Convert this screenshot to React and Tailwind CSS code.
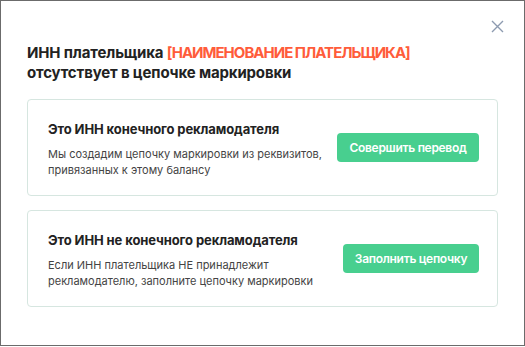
import React from 'react';

const options = [
  {
    title: 'Это ИНН конечного рекламодателя',
    lines: ['Мы создадим цепочку маркировки из реквизитов,', 'привязанных к этому балансу'],
    action: 'Совершить перевод',
    btn: 'w-[142px]',
  },
  {
    title: 'Это ИНН не конечного рекламодателя',
    lines: ['Если ИНН плательщика НЕ принадлежит', 'рекламодателю, заполните цепочку маркировки'],
    action: 'Заполнить цепочку',
    btn: 'w-[136px]',
  },
];

const App = () => {
  return (
    <div className="w-[525px] h-[347px] bg-white font-['Inter',sans-serif]">
      <div className="relative h-[346px] border border-[#6b6b6b] bg-white pl-[26px] pr-[26px] pt-[42px]">
        <button className="absolute right-[20px] top-[19px] text-[#8d9bb0]">
          <svg width="13" height="13" viewBox="0 0 13 13" fill="none">
            <path d="M1 1L12 12M12 1L1 12" stroke="currentColor" strokeWidth="1.4" />
          </svg>
        </button>

        <h2 className="text-[15px] leading-[20px] font-bold text-[#222] tracking-[-0.15px]">
          ИНН плательщика{' '}
          <span className="text-[#ff5c3a] tracking-[-1px]">[НАИМЕНОВАНИЕ ПЛАТЕЛЬЩИКА]</span>
          <br />
          отсутствует в цепочке маркировки
        </h2>

        <div className="mt-[16px] flex flex-col gap-[14px]">
          {options.map((o) => (
            <div
              key={o.title}
              className="flex h-[97px] items-center justify-between rounded-[4px] border border-[#d6e6e0] pl-[20px] pr-[18px]"
            >
              <div className="pt-[3px]">
                <div className="text-[13px] leading-[18px] font-bold text-[#222] tracking-[-0.1px]">{o.title}</div>
                <div className="mt-[8px] text-[11px] leading-[16px] text-[#444]">
                  {o.lines.map((l) => (
                    <div key={l}>{l}</div>
                  ))}
                </div>
              </div>
              <button
                className={`h-[29px] ${o.btn} rounded-[4px] bg-[#48cf8f] text-[12px] font-semibold text-white tracking-[-0.3px]`}
              >
                {o.action}
              </button>
            </div>
          ))}
        </div>
      </div>
    </div>
  );
};

export default App;
